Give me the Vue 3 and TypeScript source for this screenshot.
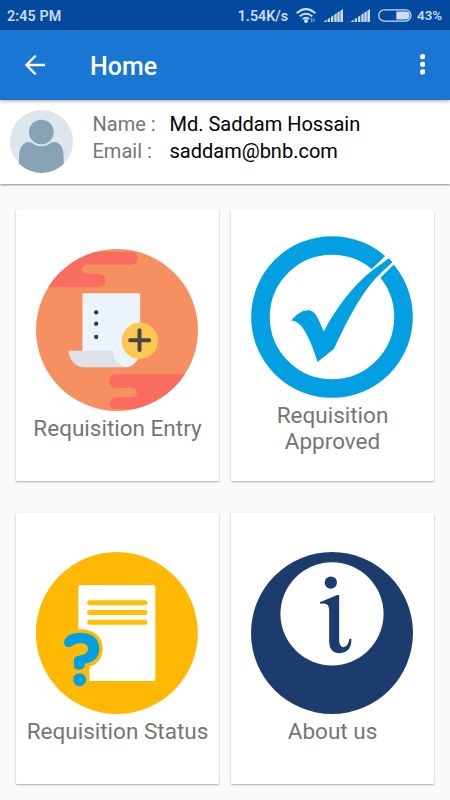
<script setup lang="ts">
type IconName = 'entry' | 'approved' | 'status' | 'about'

interface Tile {
  icon: IconName
  label: string
}

const tiles: Tile[] = [
  { icon: 'entry', label: 'Requisition Entry' },
  { icon: 'approved', label: 'Requisition Approved' },
  { icon: 'status', label: 'Requisition Status' },
  { icon: 'about', label: 'About us' },
]

const profile = [
  { key: 'Name :', value: 'Md. Saddam Hossain' },
  { key: 'Email :', value: 'saddam@bnb.com' },
]
</script>

<template>
  <div class="screen">
    <div class="status-bar">
      <span class="clock">2:45 PM</span>
      <span class="speed">1.54K/s</span>
      <svg class="wifi" viewBox="0 0 60 45">
        <g fill="none" stroke="#cddcf0" stroke-width="6">
          <path d="M2 16Q30 -9 58 16" />
          <path d="M11 25Q30 9 49 25" />
          <path d="M20 33Q30 25 40 33" />
        </g>
        <circle cx="30" cy="39" r="6" fill="#cddcf0" />
        <path d="M47 30v12M54 32v9" stroke="#7fa4d3" stroke-width="4" />
      </svg>
      <svg v-for="n in 2" :key="n" class="signal" viewBox="0 0 57 39">
        <path
          fill="#cddcf0"
          d="M0 39v-2l8-5v7zM11 39v-9l7-4v13zM21 39v-15l7-5v20zM31 39v-22l7-5v27zM40 39v-28l7-5v33zM49 39v-34l8-5v39z"
        />
      </svg>
      <svg class="battery" viewBox="0 0 102 38">
        <rect x="2" y="2" width="97" height="34" rx="17" fill="none" stroke="#cddcf0" stroke-width="3.5" />
        <path d="M55 7h28a12 12 0 0 1 0 24h-28z" fill="#cddcf0" />
      </svg>
      <span class="percent">43%</span>
    </div>

    <header class="app-bar">
      <svg class="back" viewBox="0 0 60 60">
        <path d="M60 30H5M32 2L4 30l28 28" fill="none" stroke="#fff" stroke-width="7" />
      </svg>
      <h1>Home</h1>
      <svg class="more" viewBox="0 0 16 62">
        <g fill="#fff">
          <circle cx="8" cy="8" r="8" />
          <circle cx="8" cy="31" r="8" />
          <circle cx="8" cy="54" r="8" />
        </g>
      </svg>
    </header>

    <section class="profile">
      <svg class="avatar" viewBox="30 45 189 189">
        <defs>
          <clipPath id="avatar-clip"><circle cx="124.500" cy="139.500" r="94.500" /></clipPath>
        </defs>
        <circle cx="124.500" cy="139.500" r="94.500" fill="#dce6ec" />
        <g clip-path="url(#avatar-clip)" fill="#86a2b3">
          <path d="M57 240V188C58 160 66 144 85 141C94 141 97 145 104 149Q124 158 144 149C151 145 156 141 164 141C184 144 191 162 191 188V240z" />
        </g>
        <circle cx="124" cy="111" r="37" fill="#86a2b3" />
      </svg>
      <dl>
        <div v-for="row in profile" :key="row.key" class="row">
          <dt>{{ row.key }}</dt>
          <dd>{{ row.value }}</dd>
        </div>
      </dl>
    </section>

    <main class="grid">
      <article v-for="tile in tiles" :key="tile.icon" class="card">
        <svg v-if="tile.icon === 'entry'" class="icon" viewBox="78.500 40 486 486">
          <defs>
            <clipPath id="entry-clip"><circle cx="321.500" cy="283" r="243" /></clipPath>
          </defs>
          <g clip-path="url(#entry-clip)">
            <rect x="78" y="40" width="487" height="487" fill="#f79061" />
            <path
              fill="#f96d60"
              d="M78 48H364a19.500 19.500 0 0 1 0 39H230a13.500 13.500 0 0 0 0 27H267a20.500 20.500 0 0 1 0 41H78z"
            />
            <path
              fill="#f96d60"
              d="M565 416H318a20.500 20.500 0 0 0 0 41H367a14 14 0 0 1 0 28H320a20 20 0 0 0 -20 18q0 12 8 17H565z"
            />
          </g>
          <path d="M218 173H391V345A47 50 0 0 1 344 395L300 370L218 346z" fill="#ebf4fc" />
          <path d="M176 345H309C309 369 324 388 348 395H224C197 395 177 371 176 345z" fill="#dde3e8" />
          <g fill="#35393e">
            <circle cx="259" cy="230" r="6.500" />
            <circle cx="259" cy="264" r="6.500" />
            <circle cx="259" cy="304" r="6.500" />
          </g>
          <circle cx="390" cy="315.500" r="54.500" fill="#fdc751" />
          <path d="M389 284V343M361 314H418" stroke="#474747" stroke-width="12" stroke-linecap="round" />
        </svg>

        <svg v-else-if="tile.icon === 'approved'" class="icon" viewBox="80 32 487 487">
          <circle cx="323.500" cy="275.500" r="215" fill="none" stroke="#02a0e3" stroke-width="56" />
          <path d="M440 134L484 91L510 117L467 160z" fill="#fff" />
          <path d="M484 91L500 75L526 101L510 117z" fill="#fff" />
          <path
            fill="#02a0e3"
            d="M201 286C222 262 240 253 258 256C278 261 284 288 299 319C335 250 386 180 449 132L495 99L505 111L473 141C420 190 376 270 329 372L280 411C267 368 251 330 233 305Q219 287 201 286z"
          />
        </svg>

        <svg v-else-if="tile.icon === 'status'" class="icon" viewBox="77 141 486 486">
          <circle cx="319.500" cy="384" r="243" fill="#ffb903" />
          <rect x="204" y="240" width="231" height="288" rx="7" fill="#fff" />
          <path
            d="M238 293H404M238 322.500H404M238 352H404"
            stroke="#ffc107"
            stroke-width="15"
            stroke-linecap="round"
          />
          <path
            d="M204 373C250 370 277 395 277 431C277 461 259 481 237 484V530H200z"
            fill="#ffb903"
          />
          <path
            fill="#02a0e3"
            d="M161 412C163 394 183 384 211 383C247 384 267 402 267 431C267 457 250 472 223 476V483Q221 493 206 494Q191 494 191 482V464Q192 453 205 452C223 450 233 443 233 432C233 420 224 415 210 415C190 414 187 427 174 427Q161 424 161 412z"
          />
          <circle cx="208" cy="524" r="19.500" fill="#02a0e3" />
        </svg>

        <svg v-else class="icon" viewBox="79 141 487 487">
          <circle cx="322.500" cy="384.500" r="243.500" fill="#1d3c6e" />
          <circle cx="322.500" cy="327" r="155" fill="#fff" />
          <circle cx="319" cy="233" r="18.500" fill="#1d3c6e" />
          <path
            fill="#1d3c6e"
            d="M286 292L338 270H344V405C344 420 350 427 358 427C368 426 372 416 375 402H381C381 428 371 445 345 445C323 444 314 431 314 409V318C314 302 308 293 288 297z"
          />
        </svg>

        <p>{{ tile.label }}</p>
      </article>
    </main>
  </div>
</template>

<style>
body {
  margin: 0;
}
</style>

<style scoped>
.screen {
  width: 450px;
  height: 800px;
  overflow: hidden;
  background: #fafafa;
  font-family: Roboto, "Liberation Sans", sans-serif;
  display: flex;
  flex-direction: column;
}

svg {
  display: block;
  flex: none;
}

.status-bar {
  height: 30px;
  flex: none;
  box-sizing: border-box;
  padding: 1px 8px 0 7px;
  display: flex;
  align-items: center;
  background: #014a9f;
  color: #cddcf0;
  font-size: 14.3px;
  font-weight: 600;
  white-space: nowrap;
}

.clock {
  letter-spacing: 0.1px;
}

.speed {
  margin-left: auto;
}

.wifi {
  width: 20px;
  height: 15px;
  margin-left: 8px;
}

.signal {
  width: 19px;
  height: 13px;
  margin-left: 8px;
}

.battery {
  width: 34px;
  height: 13px;
  margin: 0 5px 0 8px;
}

.percent {
  font-size: 13.4px;
  letter-spacing: -0.1px;
}

.app-bar {
  height: 70px;
  flex: none;
  box-sizing: border-box;
  padding: 0 25px;
  display: flex;
  align-items: center;
  background: #1976d3;
  border-bottom: 1px solid #1470cd;
  color: #fff;
  position: relative;
  z-index: 2;
  box-shadow: 0 1px 4px rgba(0, 0, 0, 0.35);
}

.back {
  width: 20px;
  height: 20px;
}

h1 {
  margin: 4px auto 0 45px;
  font-size: 25px;
  line-height: 30px;
  font-weight: 500;
}

.more {
  width: 5.4px;
  height: 20.6px;
}

.profile {
  height: 84px;
  flex: none;
  box-sizing: border-box;
  padding: 10px 10px 0;
  display: flex;
  align-items: flex-start;
  background: #fff;
  box-shadow: 0 1px 2px rgba(0, 0, 0, 0.45);
}

.avatar {
  width: 63px;
  height: 63px;
}

dl {
  margin: 1px 0 0 19.5px;
  font-size: 20px;
  line-height: 27px;
}

.row {
  display: flex;
}

dt {
  width: 77px;
  color: #757575;
}

dd {
  margin: 0;
  color: #000;
}

.grid {
  display: grid;
  grid-template-columns: 203px 203px;
  grid-auto-rows: 271px;
  gap: 32px 12px;
  padding: 26px 16px 0;
}

.card {
  box-sizing: border-box;
  padding: 0 16px 2px;
  display: flex;
  flex-direction: column;
  align-items: center;
  justify-content: center;
  background: #fff;
  border-radius: 1px;
  box-shadow: 0 1px 2px rgba(0, 0, 0, 0.3), 0 0 1px rgba(0, 0, 0, 0.15);
}

.icon {
  width: 162px;
  height: 162px;
  margin-right: 1.4px;
}

p {
  margin: 4px -12px 0;
  max-width: 187px;
  font-size: 22.5px;
  line-height: 26px;
  text-align: center;
  color: #757575;
}
</style>
